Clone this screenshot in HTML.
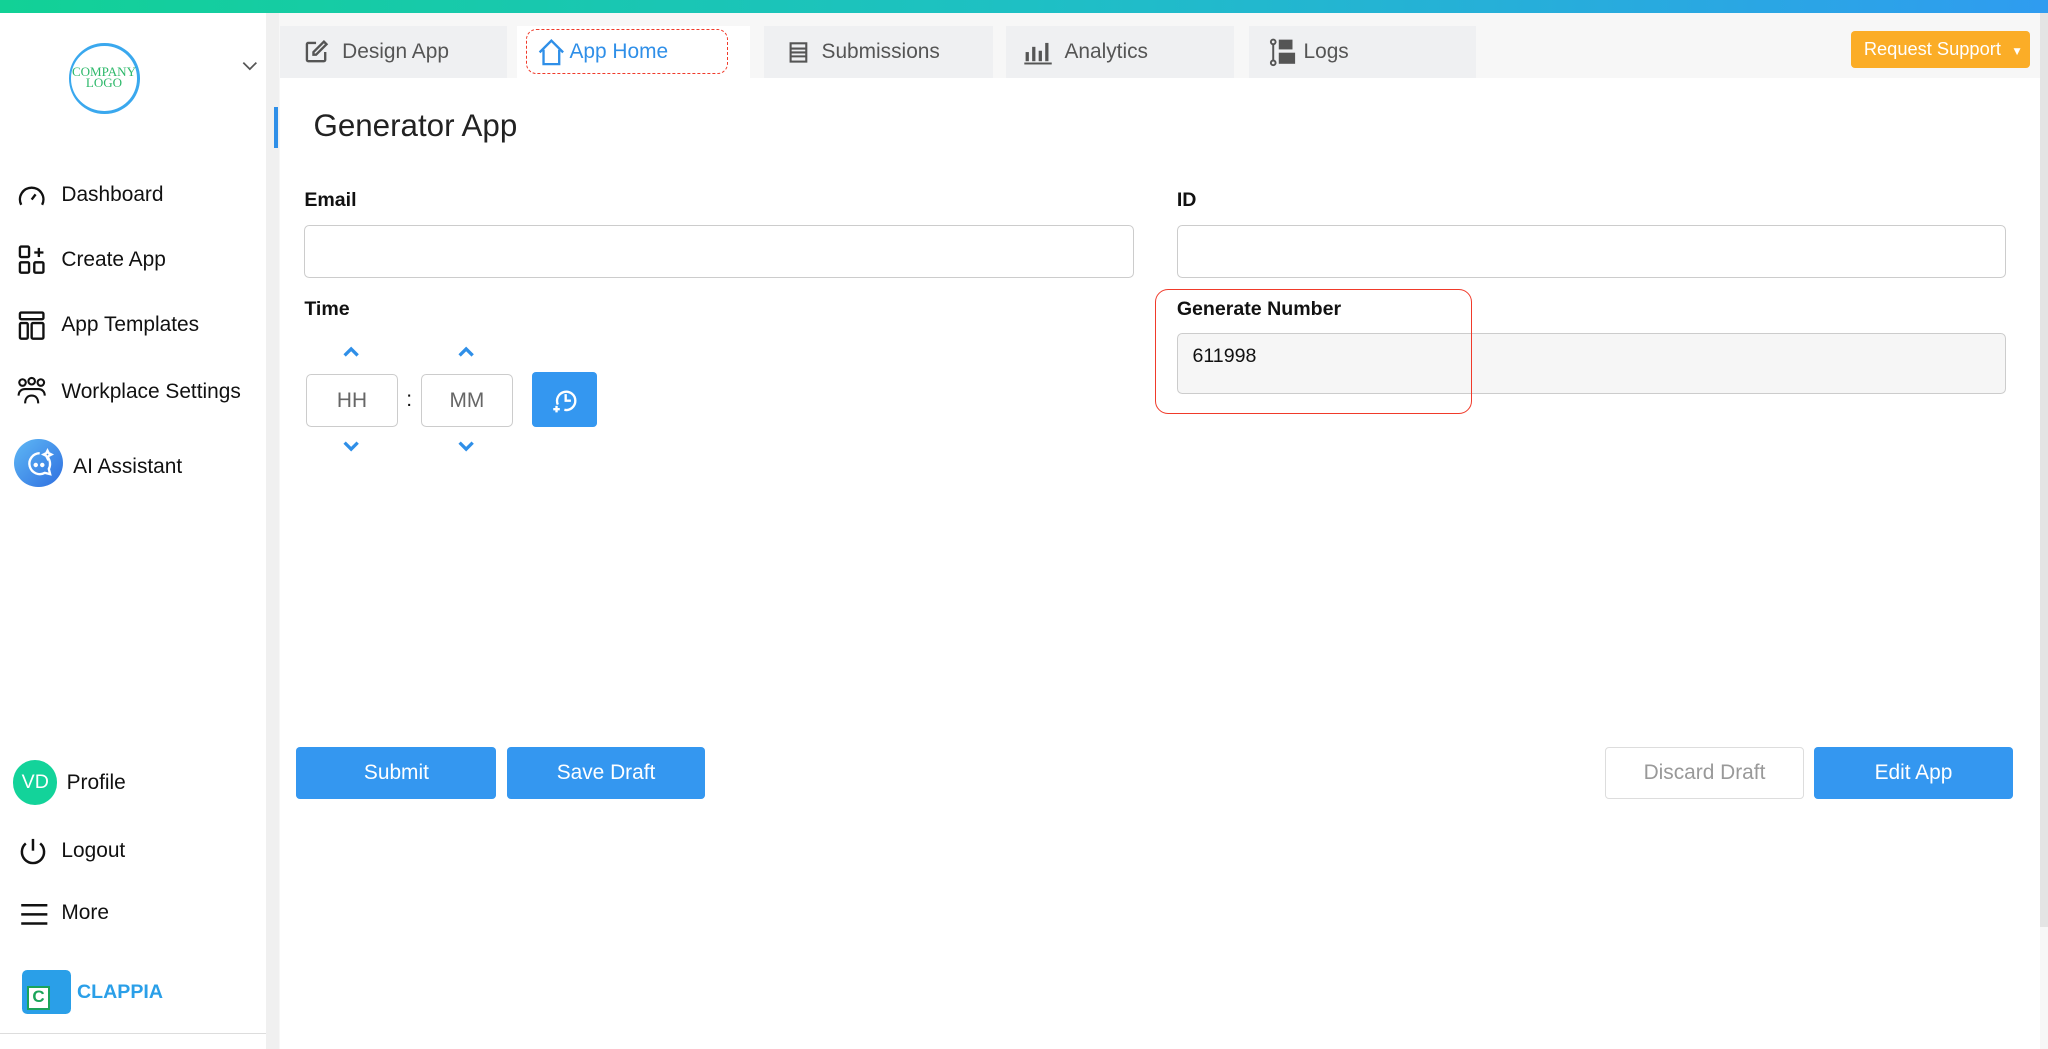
<!DOCTYPE html>
<html><head><meta charset="utf-8"><style>
*{box-sizing:border-box;margin:0;padding:0}
html,body{width:2048px;height:1049px;overflow:hidden;background:#f2f2f2}
#w{zoom:1.30612;width:1568px;height:803px;position:relative;font-family:"Liberation Sans",sans-serif;color:#111;background:#f7f7f7}
.a{position:absolute}
.top{left:0;top:0;width:1568px;height:10px;background:linear-gradient(90deg,#12d196,#1ec0c4 50%,#2f9cf0)}
.side{left:0;top:10px;width:204px;height:793px;background:#fff}
.gap{left:204px;top:10px;width:10px;height:793px;background:#f0f0f0}
.nav{left:47px;font-size:16px;color:#111}
.ic{left:12px}
.tab{top:20px;height:40px;background:#eff0f2;font-size:16px;color:#555;display:flex;align-items:center}
.main{left:214px;top:60px;width:1348px;height:743px;background:#fff}
.lbl{font-size:15px;font-weight:bold;color:#111}
.in{border:1px solid #ccc;border-radius:4px;background:#fff}
.btn{top:572px;height:40px;background:#3497f0;color:#fff;border-radius:3px;font-size:16px;display:flex;align-items:center;justify-content:center}
.chev{color:#2f8fe8;font-size:12px}
</style></head><body><div id="w">
<div class="a top"></div>
<div class="a side"></div>
<div class="a gap"></div>
<div class="a" style="left:1562px;top:10px;width:6px;height:700px;background:#e4e4e4"></div>
<!-- logo -->
<div class="a" style="left:53px;top:33px;width:54px;height:54px;border-radius:50%;border:3px solid #3aa8ee;border-left-width:2px;text-align:center;font-family:'Liberation Serif',serif;font-size:10px;line-height:9px;color:#2db86a;padding-top:15px">COMPANY<br>LOGO</div>
<svg class="a" style="left:185px;top:46px" width="12" height="10"><path d="M1 2l5 5 5-5" fill="none" stroke="#555" stroke-width="1.3"/></svg>
<!-- nav -->
<svg class="a ic" style="top:138px" width="24" height="24" fill="none" stroke="#111" stroke-width="1.8"><path d="M4 19a9 9 0 1 1 16 0"/><path d="M12 15l3-4"/></svg>
<div class="a nav" style="top:140px">Dashboard</div>
<svg class="a ic" style="top:187px" width="24" height="24" fill="none" stroke="#111" stroke-width="1.8"><rect x="3" y="2" width="7" height="8" rx="1"/><rect x="3" y="14" width="7" height="8" rx="1"/><rect x="14" y="14" width="7" height="8" rx="1"/><path d="M17.5 3v7M14 6.5h7"/></svg>
<div class="a nav" style="top:190px">Create App</div>
<svg class="a ic" style="top:237px" width="24" height="24" fill="none" stroke="#111" stroke-width="1.8"><rect x="3" y="2" width="18" height="5" rx="1"/><rect x="3" y="10" width="6" height="12" rx="1"/><rect x="12" y="10" width="9" height="12" rx="1"/></svg>
<div class="a nav" style="top:240px">App Templates</div>
<svg class="a ic" style="top:288px" width="24" height="24" fill="none" stroke="#111" stroke-width="1.6"><circle cx="5" cy="5" r="2.5"/><circle cx="12" cy="4" r="2.5"/><circle cx="19" cy="5" r="2.5"/><path d="M2 15c0-3 2-5 5-5h10c3 0 5 2 5 5M7 21c0-4 2-6 5-6s5 2 5 6"/></svg>
<div class="a nav" style="top:291px">Workplace Settings</div>
<div class="a" style="left:11px;top:336px;width:37px;height:37px;border-radius:50%;background:linear-gradient(135deg,#5fb8f5,#2f6fe0)"></div>
<svg class="a" style="left:18px;top:343px" width="24" height="24" fill="none" stroke="#fff" stroke-width="1.8"><path d="M12 4a8 8 0 1 0 4 15l4 1-1-4a8 8 0 0 0-1-9"/><circle cx="9" cy="13" r=".8" fill="#fff"/><circle cx="14" cy="13" r=".8" fill="#fff"/><path d="M18 2l1 2 2 1-2 1-1 2-1-2-2-1 2-1z"/></svg>
<div class="a nav" style="left:56px;top:348px">AI Assistant</div>
<div class="a" style="left:10px;top:582px;width:34px;height:34px;border-radius:50%;background:#13d39a;color:#fff;font-size:15px;text-align:center;line-height:34px">VD</div>
<div class="a nav" style="left:51px;top:590px">Profile</div>
<svg class="a ic" style="top:639px" width="26" height="26" fill="none" stroke="#111" stroke-width="1.9"><path d="M13 3v9"/><path d="M7.5 6.5a8.5 8.5 0 1 0 11 0"/></svg>
<div class="a nav" style="top:642px">Logout</div>
<svg class="a ic" style="top:689px" width="26" height="22" fill="none" stroke="#111" stroke-width="1.9"><path d="M4 4h20M4 11h20M4 18h20"/></svg>
<div class="a nav" style="top:690px">More</div>
<div class="a" style="left:17px;top:743px;width:37px;height:33px;background:#2a9fe8;border-radius:4px"></div>
<div class="a" style="left:21px;top:755px;width:17px;height:18px;background:#fff;border:2px solid #1aa45a;color:#1aa45a;font-weight:bold;font-size:13px;line-height:14px;text-align:center">C</div>
<div class="a" style="left:59px;top:751px;font-size:15px;font-weight:bold;color:#2a9fe8">CLAPPIA</div>
<div class="a" style="left:0;top:791px;width:204px;height:1px;background:#ddd"></div>
<!-- tabs -->
<div class="a tab" style="left:214px;width:174px"><svg style="margin:0 10px 0 18px" width="20" height="20" fill="none" stroke="#555" stroke-width="1.8"><path d="M10 3H4a1 1 0 0 0-1 1v12a1 1 0 0 0 1 1h12a1 1 0 0 0 1-1v-6"/><path d="M16 2l2 2-8 8H8v-2z"/></svg>Design App</div>
<div class="a tab" style="left:396px;width:178px;background:#fff;color:#2f8fe8"></div>
<div class="a" style="left:403px;top:22px;width:154px;height:35px;border:1.5px dashed #f03a2a;border-radius:8px"></div>
<svg class="a" style="left:411px;top:29px" width="22" height="22" fill="none" stroke="#2f8fe8" stroke-width="1.8"><path d="M2 11L11 2l9 9M5 9v11h12V9"/></svg>
<div class="a" style="left:436px;top:31px;font-size:16px;color:#2f8fe8">App Home</div>
<div class="a tab" style="left:585px;width:175px"><svg style="margin:0 10px 0 18px" width="16" height="16" fill="none" stroke="#555" stroke-width="1.6"><rect x="2" y="1" width="12" height="14"/><path d="M2 5h12M2 8h12M2 11h12"/></svg>Submissions</div>
<div class="a tab" style="left:770px;width:175px"><svg style="margin:0 8px 0 13px" width="24" height="20" fill="#555"><rect x="2" y="10" width="2.5" height="7"/><rect x="7" y="6" width="2.5" height="11"/><rect x="12" y="9" width="2.5" height="8"/><rect x="17" y="3" width="2.5" height="14"/><rect x="1" y="18" width="21" height="1.5"/></svg>Analytics</div>
<div class="a tab" style="left:956px;width:174px"><svg style="margin:0 5px 0 15px" width="22" height="22" fill="none" stroke="#555" stroke-width="1.5"><circle cx="4" cy="3" r="1.8"/><circle cx="4" cy="19" r="1.8"/><path d="M4 5v12"/><rect x="9" y="2" width="9" height="6" fill="#555"/><rect x="9" y="12" width="11" height="7" fill="#555"/></svg>Logs</div>
<div class="a" style="left:1417px;top:24px;width:137px;height:28px;background:#fbad27;border-radius:3px;color:#fff;font-size:14px;line-height:28px;padding-left:10px">Request Support <span style="font-size:9px;margin-left:4px">▼</span></div>
<!-- main -->
<div class="a main"></div>
<div class="a" style="left:210px;top:82px;width:3px;height:31px;background:#2f8fe8"></div>
<div class="a" style="left:240px;top:83px;font-size:24px;color:#222">Generator App</div>
<div class="a lbl" style="left:233px;top:145px">Email</div>
<div class="a in" style="left:233px;top:172px;width:635px;height:41px"></div>
<div class="a lbl" style="left:901px;top:145px">ID</div>
<div class="a in" style="left:901px;top:172px;width:635px;height:41px"></div>
<div class="a lbl" style="left:233px;top:228px">Time</div>
<svg class="a" style="left:262px;top:264px" width="14" height="10"><path d="M2 8l5-5 5 5" fill="none" stroke="#2f8fe8" stroke-width="2.5"/></svg>
<svg class="a" style="left:350px;top:264px" width="14" height="10"><path d="M2 8l5-5 5 5" fill="none" stroke="#2f8fe8" stroke-width="2.5"/></svg>
<div class="a in" style="left:234px;top:286px;width:71px;height:41px;font-size:16px;color:#666;text-align:center;line-height:40px">HH</div>
<div class="a" style="left:311px;top:297px;font-size:16px">:</div>
<div class="a in" style="left:322px;top:286px;width:71px;height:41px;font-size:16px;color:#666;text-align:center;line-height:40px">MM</div>
<div class="a" style="left:407px;top:285px;width:50px;height:42px;background:#3497f0;border-radius:3px"></div>
<svg class="a" style="left:421px;top:295px" width="22" height="22" fill="none" stroke="#fff" stroke-width="1.8"><path d="M6 15a7 7 0 1 1 5 4"/><path d="M12 7v5h4"/><path d="M5 16v5M2.5 18.5h5"/></svg>
<svg class="a" style="left:262px;top:337px" width="14" height="10"><path d="M2 2l5 5 5-5" fill="none" stroke="#2f8fe8" stroke-width="2.5"/></svg>
<svg class="a" style="left:350px;top:337px" width="14" height="10"><path d="M2 2l5 5 5-5" fill="none" stroke="#2f8fe8" stroke-width="2.5"/></svg>
<div class="a lbl" style="left:901px;top:228px">Generate Number</div>
<div class="a" style="left:901px;top:255px;width:635px;height:47px;background:#f6f6f6;border:1px solid #ccc;border-radius:4px"></div>
<div class="a" style="left:913px;top:264px;font-size:15px">611998</div>
<div class="a" style="left:884px;top:221px;width:243px;height:96px;border:1.5px solid #f03a2a;border-radius:10px"></div>
<div class="a btn" style="left:227px;width:153px">Submit</div>
<div class="a btn" style="left:388px;width:152px">Save Draft</div>
<div class="a btn" style="left:1229px;width:152px;background:#fff;border:1px solid #ddd;color:#999">Discard Draft</div>
<div class="a btn" style="left:1389px;width:152px">Edit App</div>
</div></body></html>
